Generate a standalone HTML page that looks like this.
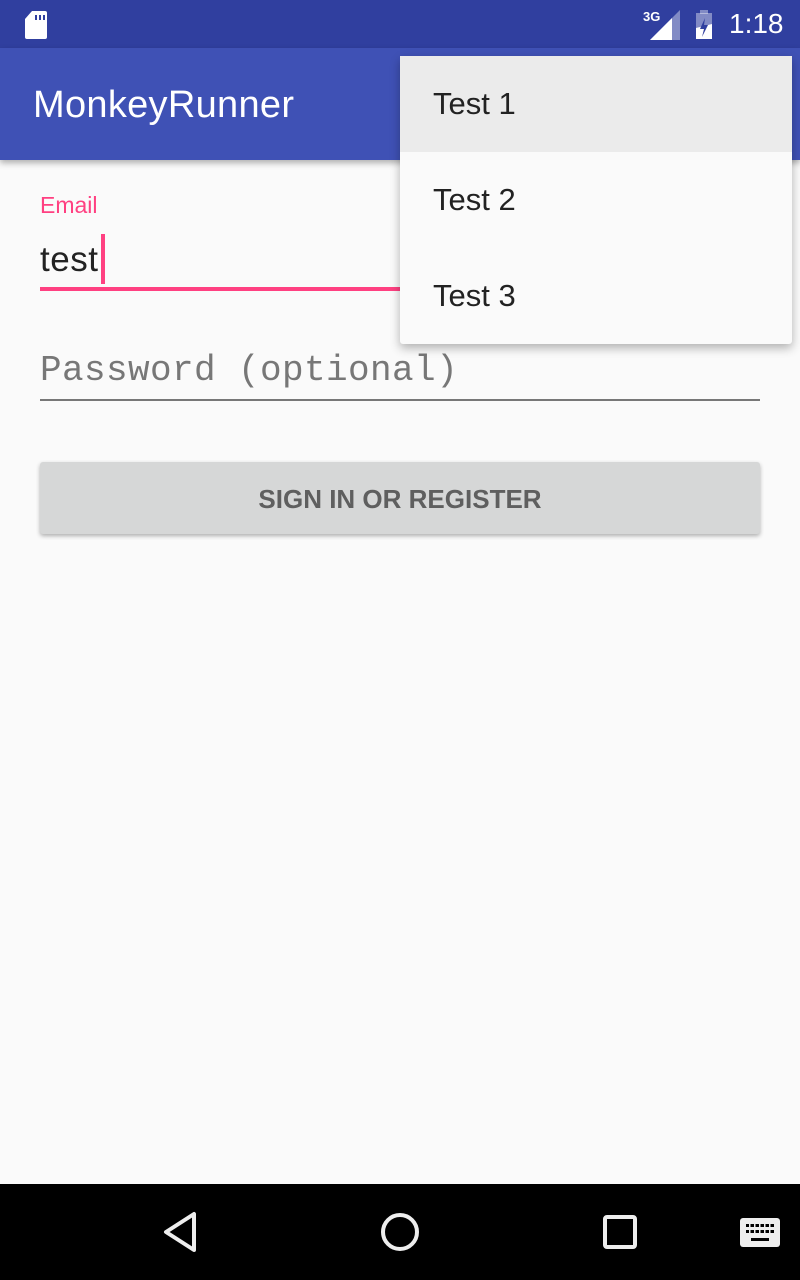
<!DOCTYPE html>
<html><head><style>
body{margin:0;width:800px;height:1280px;position:relative;background:#fafafa;font-family:"Liberation Sans",Roboto,sans-serif;overflow:hidden}
.abs{position:absolute}
</style></head><body>
<div class="abs" style="left:0;top:0;width:800px;height:48px;background:#303f9f"></div>
<svg class="abs" style="left:24px;top:10px" width="24" height="30" viewBox="0 0 24 30"><path d="M8 1h13a2 2 0 0 1 2 2v24a2 2 0 0 1-2 2H3a2 2 0 0 1-2-2V9z" fill="#fff"/><rect x="11" y="5" width="2" height="5" fill="#303f9f"/><rect x="15" y="5" width="2" height="5" fill="#303f9f"/><rect x="19" y="5" width="2" height="5" fill="#303f9f"/></svg>
<div class="abs" style="left:643px;top:9px;color:#fff;font-size:13px;font-weight:bold">3G</div>
<svg class="abs" style="left:650px;top:10px" width="30" height="30"><polygon points="30,0 30,30 0,30" fill="#fff" opacity=".4"/><polygon points="22,8 22,30 0,30" fill="#fff"/></svg>
<svg class="abs" style="left:694px;top:10px" width="22" height="30"><rect x="6" y="0" width="8" height="4" fill="#fff" opacity=".4"/><rect x="2" y="3" width="16" height="26" fill="#fff" opacity=".4"/><polygon points="2,18 18,14 18,29 2,29" fill="#fff"/><polygon points="11,8 6,19 10,19 8,27 14,15 10,15" fill="#303f9f"/></svg>
<div class="abs" style="left:729px;top:8px;color:#fff;font-size:28px">1:18</div>
<div class="abs" style="left:0;top:48px;width:800px;height:112px;background:#3f51b5;box-shadow:0 3px 6px rgba(0,0,0,.3)"></div>
<div class="abs" style="left:33px;top:84px;color:#fff;font-size:38px;font-weight:500;letter-spacing:0.3px">MonkeyRunner</div>
<div class="abs" style="left:40px;top:192px;color:#ff4081;font-size:23px">Email</div>
<div class="abs" style="left:40px;top:240px;color:#222;font-size:35px;letter-spacing:0.5px">test</div>
<div class="abs" style="left:101px;top:234px;width:4px;height:50px;background:#ff4081"></div>
<div class="abs" style="left:40px;top:287px;width:720px;height:4px;background:#ff4081"></div>
<div class="abs" style="left:40px;top:350px;color:#777;font-size:36px;font-family:'Liberation Mono',monospace;letter-spacing:0.4px">Password (optional)</div>
<div class="abs" style="left:40px;top:399px;width:720px;height:2px;background:#777"></div>
<div class="abs" style="left:40px;top:462px;width:720px;height:72px;background:#d6d7d7;border-radius:3px;box-shadow:0 2px 4px rgba(0,0,0,.3);text-align:center;line-height:74px;color:#5f5f5f;font-size:26px;font-weight:bold">SIGN IN OR REGISTER</div>
<div class="abs" style="left:400px;top:56px;width:392px;height:288px;background:#fafafa;border-radius:3px;box-shadow:0 4px 10px rgba(0,0,0,.3)">
<div style="height:96px;background:#ebebeb;line-height:96px;padding-left:33px;font-size:31px;color:#222">Test 1</div>
<div style="height:96px;line-height:96px;padding-left:33px;font-size:31px;color:#222">Test 2</div>
<div style="height:96px;line-height:96px;padding-left:33px;font-size:31px;color:#222">Test 3</div>
</div>
<div class="abs" style="left:0;top:1184px;width:800px;height:96px;background:#000"></div>
<svg class="abs" style="left:160px;top:1210px" width="40" height="46"><polygon points="34,4 34,40 6,22" fill="none" stroke="#eee" stroke-width="4" stroke-linejoin="round"/></svg>
<svg class="abs" style="left:380px;top:1212px" width="40" height="40"><circle cx="20" cy="20" r="17" fill="none" stroke="#eee" stroke-width="4"/></svg>
<svg class="abs" style="left:602px;top:1214px" width="36" height="36"><rect x="3" y="3" width="30" height="30" rx="2" fill="none" stroke="#eee" stroke-width="4"/></svg>
<svg class="abs" style="left:740px;top:1218px" width="40" height="30"><rect width="40" height="29" rx="3" fill="#eee"/><g fill="#000"><rect x="6" y="6" width="28" height="3"/><rect x="6" y="12" width="28" height="3"/><rect x="11" y="20" width="18" height="3"/></g><g fill="#eee"><rect x="9" y="5" width="1.5" height="11"/><rect x="14" y="5" width="1.5" height="11"/><rect x="19" y="5" width="1.5" height="11"/><rect x="24" y="5" width="1.5" height="11"/><rect x="29" y="5" width="1.5" height="11"/></g></svg>
</body></html>
